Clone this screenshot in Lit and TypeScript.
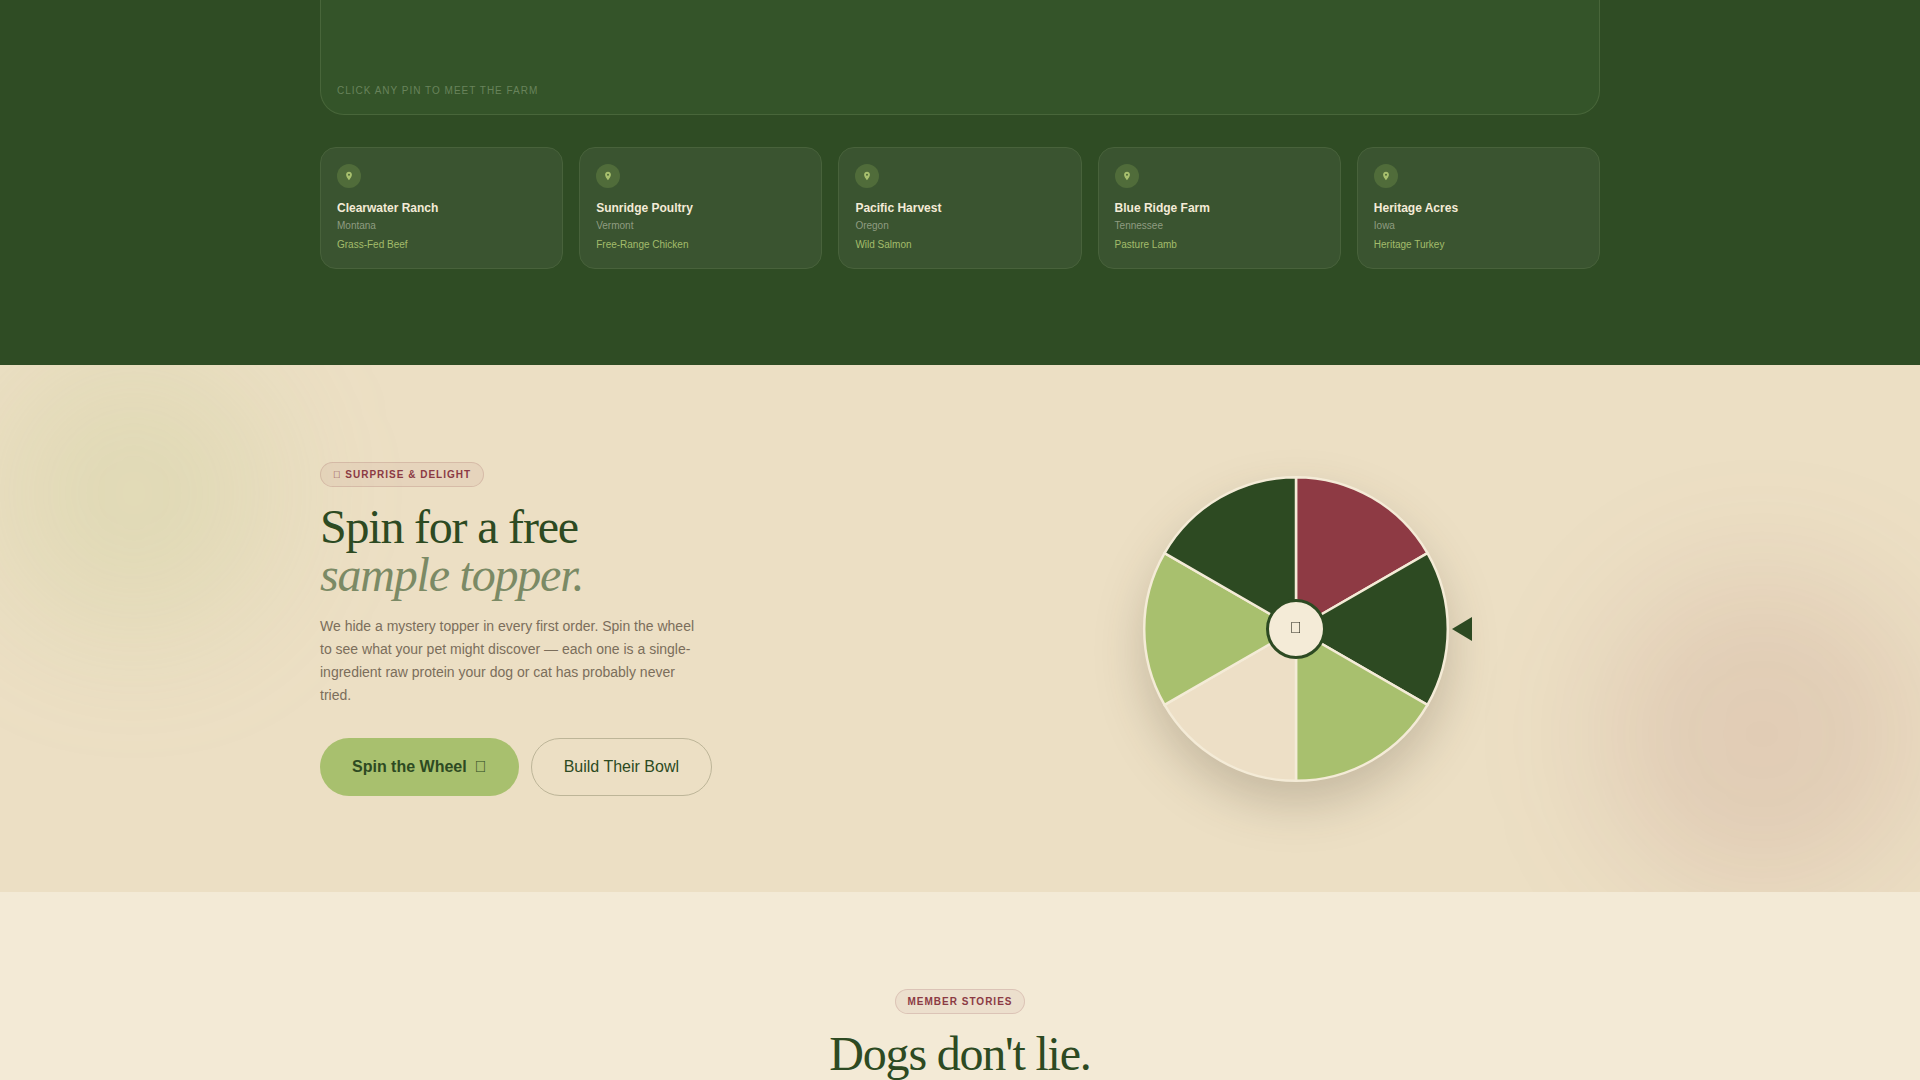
import { LitElement, html, css, svg } from "lit";
import { customElement, state } from "lit/decorators.js";

interface Farm {
  name: string;
  place: string;
  protein: string;
}

const FARMS: Farm[] = [
  { name: "Clearwater Ranch", place: "Montana", protein: "Grass-Fed Beef" },
  { name: "Sunridge Poultry", place: "Vermont", protein: "Free-Range Chicken" },
  { name: "Pacific Harvest", place: "Oregon", protein: "Wild Salmon" },
  { name: "Blue Ridge Farm", place: "Tennessee", protein: "Pasture Lamb" },
  { name: "Heritage Acres", place: "Iowa", protein: "Heritage Turkey" },
];

const GIFT = "\uf06b";

// Wheel segments, clockwise from twelve o'clock.
const SEGMENTS = ["#8e3a44", "#2d4a22", "#a8c06e", "#eddfc6", "#a8c06e", "#2d4a22"];
const RADIUS = 151.8;

function segmentPath(index: number): string {
  const step = (Math.PI * 2) / SEGMENTS.length;
  const at = (angle: number) =>
    `${(RADIUS * Math.sin(angle)).toFixed(2)} ${(-RADIUS * Math.cos(angle)).toFixed(2)}`;
  return `M0 0 L${at(index * step)} A${RADIUS} ${RADIUS} 0 0 1 ${at((index + 1) * step)} Z`;
}

@customElement("farm-card")
export class FarmCard extends LitElement {
  static properties = { farm: { attribute: false } };
  declare farm: Farm;

  static styles = css`
    :host {
      display: block;
      box-sizing: border-box;
      padding: 16px;
      border: 1px solid #48623b;
      border-radius: 16px;
      background: #3a5430;
    }
    .pin {
      display: flex;
      align-items: center;
      justify-content: center;
      width: 24px;
      height: 24px;
      margin-bottom: 12px;
      border-radius: 50%;
      background: #506c3a;
    }
    .icon {
      width: 10px;
      height: 10px;
      fill: #a8c06e;
    }
    .name {
      margin: 0;
      font-size: 12px;
      line-height: 16px;
      font-weight: 700;
      color: #f4ebd7;
    }
    .place {
      margin: 2px 0 0;
      font-size: 10px;
      line-height: 15px;
      color: #8f9c81;
    }
    .protein {
      margin: 4px 0 0;
      font-size: 10px;
      line-height: 15px;
      color: #a3bc6b;
    }
  `;

  render() {
    return html`
      <div class="pin">
        <svg class="icon" viewBox="0 0 24 24" aria-hidden="true">
          <path
            fill-rule="evenodd"
            d="M12 2C8.13 2 5 5.13 5 9c0 5.25 7 13 7 13s7-7.75 7-13c0-3.87-3.13-7-7-7zm0 9.5a2.5 2.5 0 1 1 0-5 2.5 2.5 0 0 1 0 5z"
          />
        </svg>
      </div>
      <h3 class="name">${this.farm.name}</h3>
      <p class="place">${this.farm.place}</p>
      <p class="protein">${this.farm.protein}</p>
    `;
  }
}

@customElement("topper-wheel")
export class TopperWheel extends LitElement {
  static properties = { turn: { type: Number } };
  declare turn: number;

  constructor() {
    super();
    this.turn = 0;
  }

  static styles = css`
    :host {
      display: block;
      position: relative;
      width: 352px;
    }
    .wheel {
      display: block;
      width: 100%;
      overflow: visible;
      filter: drop-shadow(0 22px 24px rgba(45, 36, 22, 0.2));
    }
    .disc {
      transition: transform 3s cubic-bezier(0.2, 0.8, 0.2, 1);
    }
    .segment {
      stroke: #f4ebd7;
      stroke-width: 2.5;
    }
    .hub {
      fill: #f4ebd7;
      stroke: #2d4a22;
      stroke-width: 3;
    }
    .gift {
      font-family: "Liberation Sans", sans-serif;
      font-size: 16px;
      text-anchor: middle;
      fill: #2a2a1e;
    }
    .pointer {
      position: absolute;
      top: calc(50% - 12px);
      right: 0;
      width: 20px;
      height: 24px;
      background: #2d4a22;
      clip-path: polygon(0 50%, 100% 0, 100% 100%);
    }
  `;

  render() {
    return html`
      <svg class="wheel" viewBox="-176 -160 352 320" role="img" aria-label="Prize wheel">
        <g class="disc" style="transform: rotate(${this.turn}deg)">
          ${SEGMENTS.map(
            (fill, i) => svg`<path class="segment" fill=${fill} d=${segmentPath(i)} />`
          )}
        </g>
        <circle class="hub" r="28.5" />
        <text class="gift" y="4">${GIFT}</text>
      </svg>
      <span class="pointer"></span>
    `;
  }
}

@customElement("app-root")
export class AppRoot extends LitElement {
  @state() private turn = 0;

  static styles = css`
    :host {
      display: block;
      min-height: 100vh;
      background: #f3ead6;
      color: #2d4a22;
      font-family: "Liberation Sans", Arial, sans-serif;
    }
    .container {
      max-width: 1280px;
      margin: 0 auto;
    }
    .farms {
      padding: 0 32px 96px;
      background: #2f4c24;
    }
    .map {
      box-sizing: border-box;
      padding: 83px 16px 16px;
      border: 1px solid #48663a;
      border-top: 0;
      border-radius: 0 0 24px 24px;
      background: #345429;
    }
    .hint {
      margin: 0;
      font-size: 10px;
      line-height: 15px;
      letter-spacing: 1px;
      text-transform: uppercase;
      color: #68835b;
    }
    .cards {
      display: grid;
      grid-template-columns: repeat(5, 1fr);
      gap: 16px;
      margin-top: 32px;
    }
    .spin {
      position: relative;
      overflow: hidden;
      padding: 97px 32px 96px;
      background: #ecdfc4;
    }
    .glow {
      position: absolute;
      border-radius: 50%;
      filter: blur(64px);
    }
    .glow-sage {
      top: -16px;
      left: -10px;
      width: 288px;
      height: 288px;
      background: rgba(168, 192, 110, 0.16);
    }
    .glow-berry {
      right: -2px;
      bottom: -2px;
      width: 320px;
      height: 320px;
      background: rgba(139, 58, 68, 0.11);
    }
    .split {
      position: relative;
      display: grid;
      grid-template-columns: 1fr 1fr;
      gap: 64px;
      align-items: center;
    }
    .stage {
      display: flex;
      justify-content: center;
    }
    .badge {
      display: block;
      width: fit-content;
      padding: 4px 12px;
      border: 1px solid rgba(139, 58, 68, 0.17);
      border-radius: 999px;
      background: rgba(139, 58, 68, 0.06);
      font-size: 10px;
      line-height: 15px;
      font-weight: 700;
      letter-spacing: 1px;
      text-transform: uppercase;
      color: #8b3a44;
    }
    .symbol {
      font-weight: 400;
    }
    .title {
      margin: 16px 0 0;
      font-family: "Liberation Serif", "Times New Roman", serif;
      font-size: 48px;
      line-height: 48px;
      font-weight: 400;
      letter-spacing: -0.025em;
      color: #2d4a22;
    }
    .accent {
      display: block;
      color: #7b8a65;
    }
    .copy {
      max-width: 384px;
      margin: 16px 0 31px;
      font-size: 14px;
      line-height: 23px;
      color: #7b6e5b;
    }
    .actions {
      display: flex;
      gap: 12px;
    }
    .button {
      display: flex;
      align-items: center;
      gap: 8px;
      padding: 16px 32px;
      border-radius: 999px;
      font-family: inherit;
      font-size: 16px;
      line-height: 24px;
      text-decoration: none;
      color: #2d4a22;
      cursor: pointer;
    }
    .primary {
      border: 0;
      background: #a8c06e;
      font-weight: 700;
    }
    .outline {
      border: 1px solid #bdb598;
    }
    .stories {
      padding: 97px 32px 0;
    }
    .intro {
      display: flex;
      flex-direction: column;
      align-items: center;
      text-align: center;
    }
  `;

  private spin() {
    this.turn += 1080 + Math.floor(Math.random() * 6) * 60;
  }

  render() {
    return html`
      <section class="farms">
        <div class="container">
          <div class="map"><p class="hint">Click any pin to meet the farm</p></div>
          <div class="cards">
            ${FARMS.map((farm) => html`<farm-card .farm=${farm}></farm-card>`)}
          </div>
        </div>
      </section>
      <section class="spin">
        <div class="glow glow-sage"></div>
        <div class="glow glow-berry"></div>
        <div class="container split">
          <div>
            <span class="badge"><span class="symbol">${GIFT}</span> Surprise &amp; Delight</span>
            <h2 class="title">Spin for a free <em class="accent">sample topper.</em></h2>
            <p class="copy">
              We hide a mystery topper in every first order. Spin the wheel to see what your pet
              might discover — each one is a single-ingredient raw protein your dog or cat has
              probably never tried.
            </p>
            <div class="actions">
              <button class="button primary" type="button" @click=${this.spin}>
                Spin the Wheel <span class="symbol">${GIFT}</span>
              </button>
              <a class="button outline" href="#build">Build Their Bowl</a>
            </div>
          </div>
          <div class="stage"><topper-wheel .turn=${this.turn}></topper-wheel></div>
        </div>
      </section>
      <section class="stories">
        <div class="container intro">
          <span class="badge">Member Stories</span>
          <h2 class="title">Dogs don't lie.</h2>
        </div>
      </section>
    `;
  }
}
